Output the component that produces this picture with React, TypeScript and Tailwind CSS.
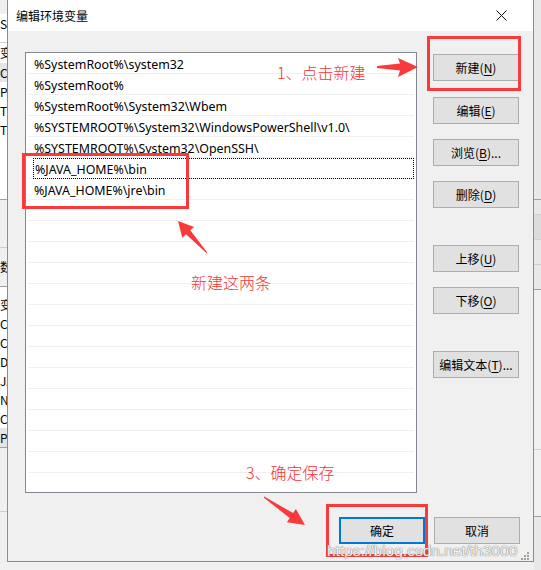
import React from "react";

const rows = [
  "%SystemRoot%\\system32",
  "%SystemRoot%",
  "%SystemRoot%\\System32\\Wbem",
  "%SYSTEMROOT%\\System32\\WindowsPowerShell\\v1.0\\",
  "%SYSTEMROOT%\\System32\\OpenSSH\\",
  "%JAVA_HOME%\\bin",
  "%JAVA_HOME%\\jre\\bin",
];

const cjk = { fontFamily: '"Noto Sans CJK SC", "Noto Sans", sans-serif' };
const latin = { fontFamily: '"Noto Sans", "Noto Sans CJK SC", sans-serif' };

function Btn({
  label,
  acc,
  tail,
  primary,
  className,
}: {
  label: string;
  acc?: string;
  tail?: string;
  primary?: boolean;
  className?: string;
}) {
  return (
    <div
      className={
        "w-[86px] h-[27px] flex items-center justify-center bg-[#e1e1e1] text-[12px] text-black leading-none " +
        (primary ? "border-2 border-[#0078d7] " : "border border-[#adadad] ") +
        (className ?? "")
      }
      style={cjk}
    >
      <span>
        {label}
        {acc !== undefined && (
          <>
            (<span className="underline underline-offset-2">{acc}</span>)
          </>
        )}
        {tail}
      </span>
    </div>
  );
}

export default function App() {
  const listRows = Array.from({ length: 22 }, (_, i) => rows[i] ?? "");
  return (
    <div className="relative w-[541px] h-[570px] overflow-hidden bg-[#f0f0f0] select-none">
      <div className="flex h-[570px]">
        {/* background window, left sliver */}
        <div className="w-[7px] h-full overflow-hidden bg-[#f0f0f0] text-[12px] text-black" style={cjk}>
          <div className="w-[60px] flex flex-col">
            <div className="h-[14px] bg-[#f0f0f0]" />
            <div className="h-[20px] bg-white flex items-center">S</div>
            <div className="h-[9px] bg-white border-b border-[#d0d0d0]" />
            <div className="h-[20px] bg-white flex items-center">变</div>
            <div className="h-[19px] bg-[#e5e5e5] flex items-center">C</div>
            <div className="h-[19px] bg-white flex items-center">P</div>
            <div className="h-[19px] bg-white flex items-center">T</div>
            <div className="h-[19px] bg-white flex items-center">T</div>
            <div className="h-[61px] bg-white border-b border-[#a0a0a0]" />
            <div className="h-[48px] bg-[#f0f0f0] border-b border-[#d0d0d0]" />
            <div className="h-[39px] bg-[#f0f0f0] flex items-center border-b border-[#a0a0a0]">数</div>
            <div className="h-[8px] bg-white" />
            <div className="h-[19px] bg-white flex items-center">变</div>
            <div className="h-[19px] bg-white flex items-center">C</div>
            <div className="h-[19px] bg-white flex items-center">C</div>
            <div className="h-[19px] bg-white flex items-center">D</div>
            <div className="h-[19px] bg-white flex items-center">JA</div>
            <div className="h-[19px] bg-white flex items-center">N</div>
            <div className="h-[19px] bg-white flex items-center">C</div>
            <div className="h-[20px] bg-[#e5e5e5] flex items-center border-b border-[#a0a0a0]">P</div>
            <div className="h-[64px] bg-[#f0f0f0] border-b border-[#d0d0d0]" />
          </div>
        </div>

        {/* dialog */}
        <div className="w-[527px] h-[562px] flex flex-col border-x border-b border-[#8c8c8c] bg-[#f0f0f0]">
          {/* title bar */}
          <div className="h-[31px] bg-white flex items-center pl-[8px] pr-[26px] shrink-0">
            <span className="text-[12px] text-black" style={cjk}>
              编辑环境变量
            </span>
            <div className="flex-1" />
            <svg width="11" height="11" viewBox="0 0 11 11">
              <path d="M0.5 0.5 L10.5 10.5 M10.5 0.5 L0.5 10.5" stroke="#111" strokeWidth="1" />
            </svg>
          </div>

          {/* body */}
          <div className="flex flex-col pt-[21px] pl-[17px] pr-[13px]">
            <div className="flex gap-[16px]">
              <div className="w-[392px] h-[441px] bg-white border border-[#828790] overflow-hidden">
                {listRows.map((t, i) => (
                  <div key={i} className="mx-[2px] h-[21px] border-b border-[#f0f0f0] pl-[5px] flex">
                    <div
                      className={
                        "flex-1 flex items-center pl-[1px] pt-[4px] text-[12.4px] text-black whitespace-nowrap " +
                        (i === 5 ? "border border-dotted border-black -mb-[1px]" : "")
                      }
                      style={latin}
                    >
                      {t}
                    </div>
                  </div>
                ))}
              </div>
              <div className="flex flex-col">
                <Btn label="新建" acc="N" className="mt-[2px]" />
                <Btn label="编辑" acc="E" className="mt-[16px]" />
                <Btn label="浏览" acc="B" tail="..." className="mt-[15px]" />
                <Btn label="删除" acc="D" className="mt-[15px]" />
                <Btn label="上移" acc="U" className="mt-[37px]" />
                <Btn label="下移" acc="O" className="mt-[15px]" />
                <Btn label="编辑文本" acc="T" tail="..." className="mt-[37px]" />
              </div>
            </div>
            <div className="flex justify-end gap-[9px] mt-[24px]">
              <Btn label="确定" primary />
              <Btn label="取消" />
            </div>
          </div>
        </div>

        {/* background window, right sliver */}
        <div className="w-[7px] h-full bg-[#e8e8e8] flex flex-col">
          <div className="h-[200px] border-b border-[#a0a0a0]" />
          <div className="h-[15px] border-b border-[#d0d0d0]" />
          <div className="h-[25px] border-b border-[#d0d0d0] bg-[#dcdcdc]" />
          <div className="h-[25px] border-b border-[#d0d0d0]" />
          <div className="h-[25px] border-b border-[#a0a0a0]" />
          <div className="h-[160px] bg-[#f0f0f0] border-b border-[#d0d0d0]" />
          <div className="h-[67px] bg-[#f0f0f0] border-b border-[#a0a0a0]" />
        </div>
      </div>

      {/* annotations */}
      <div className="absolute left-[22px] top-[153px] w-[167px] h-[56px] border-[3px] border-[#f83a3a]" />
      <div className="absolute left-[427px] top-[36px] w-[94px] h-[55px] border-[3px] border-[#f83a3a]" />
      <div className="absolute left-[326px] top-[504px] w-[102px] h-[53px] border-[3px] border-[#f83a3a]" />

      <div className="absolute left-[277px] top-[62px] text-[16px] leading-[20px] text-[#f53434] font-light whitespace-nowrap" style={cjk}>
        1、点击新建
      </div>
      <div className="absolute left-[191px] top-[272px] text-[16px] leading-[20px] text-[#f53434] font-light whitespace-nowrap" style={cjk}>
        新建这两条
      </div>
      <div className="absolute left-[246px] top-[462px] text-[16px] leading-[20px] text-[#f53434] font-light whitespace-nowrap" style={cjk}>
        3、确定保存
      </div>

      <svg className="absolute inset-0 pointer-events-none" width="541" height="570" viewBox="0 0 541 570">
        <polygon points="377,66 400,63.5 398,58 418,67 398,77 400,70.5 377,68" fill="#f83a3a" />
        <polygon points="207.4,252.7 190.4,230.3 194.1,226.9 178,221 182.3,237.7 186,234.3 206.6,253.3" fill="#f83a3a" />
        <polygon points="263.7,497.4 289.7,518.1 286.9,522.2 305,525 295.9,509 293.1,513.1 264.3,496.6" fill="#f83a3a" />
        {/* resize grip */}
        <g fill="#a0a0a0">
          <rect x="527" y="552" width="2" height="2" />
          <rect x="524" y="555" width="2" height="2" />
          <rect x="527" y="555" width="2" height="2" />
          <rect x="521" y="558" width="2" height="2" />
          <rect x="524" y="558" width="2" height="2" />
          <rect x="527" y="558" width="2" height="2" />
        </g>
      </svg>

      <div
        className="absolute left-[327px] top-[541px] text-[15.5px] leading-[20px] text-white/90 whitespace-nowrap [text-shadow:0_0_1px_#777,0_0_1px_#777]"
        style={{ fontFamily: '"Liberation Sans", Arial, sans-serif' }}
      >
        https://blog.csdn.net/th3000
      </div>
    </div>
  );
}
